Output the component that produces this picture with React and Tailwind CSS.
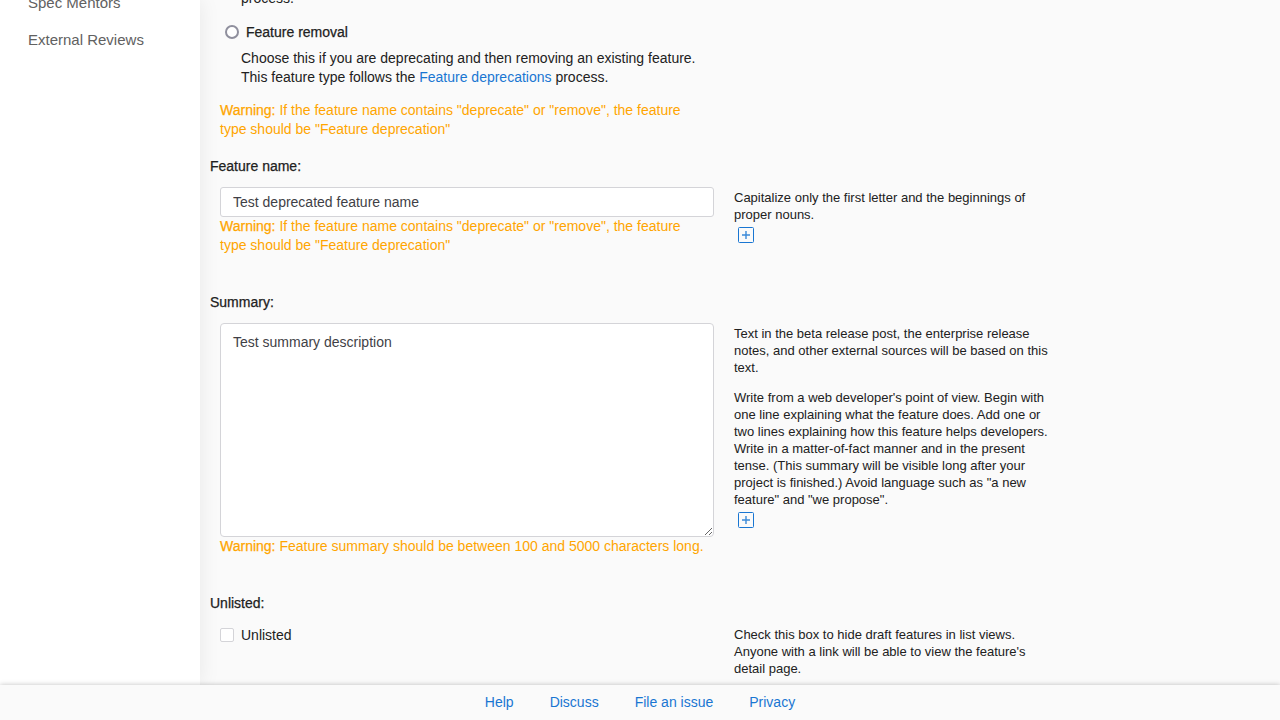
import React from "react";

const NAME_WARNING =
  'If the feature name contains "deprecate" or "remove", the feature type should be "Feature deprecation"';

const footerLinks = ["Help", "Discuss", "File an issue", "Privacy"];

function Link({ children }) {
  return (
    <a href="#" className="text-[#1976d2]">
      {children}
    </a>
  );
}

function Warning({ children }) {
  return (
    <p className="pr-2 text-[#ffa500]">
      <span className="[-webkit-text-stroke:0.25px_#ffa500]">Warning:</span> {children}
    </p>
  );
}

function MoreButton() {
  return (
    <button type="button" aria-label="Show more help" className="mt-1 ml-1 block text-[#1976d2]">
      <svg viewBox="0 0 16 16" className="block size-4" fill="none" stroke="currentColor">
        <rect x="0.5" y="0.5" width="15" height="15" rx="1" />
        <path d="M8 4v8M4 8h8" strokeWidth="1.4" opacity="0.85" />
      </svg>
    </button>
  );
}

function FieldRow({ id, label, help, more, className = "", children }) {
  return (
    <section className={className}>
      <label htmlFor={id} className="block [-webkit-text-stroke:0.25px_#212121]">
        {label}
      </label>
      <div className="mt-[11px] flex gap-5 pl-[10px]">
        <div className="w-[494px] shrink-0">{children}</div>
        <div className="w-[318px] pt-0.5 text-[13px] leading-[17px]">
          <div className="space-y-[13px]">
            {help.map((text) => (
              <p key={text}>{text}</p>
            ))}
          </div>
          {more && <MoreButton />}
        </div>
      </div>
    </section>
  );
}

export default function App() {
  return (
    <div className="flex h-screen flex-col overflow-hidden bg-[#fafafa] font-['Liberation_Sans',Arial,sans-serif] text-[14px] leading-[19px] text-[#212121]">
      <div className="flex min-h-0 flex-1 overflow-hidden">
        <nav className="w-[200px] shrink-0 bg-white shadow-[0_0_20px_rgba(0,0,0,0.08)]">
          <ul className="-mt-2 space-y-[15px] pl-7 text-[15px] leading-[22px] text-[#616161]">
            <li>
              <a href="#">Spec Mentors</a>
            </li>
            <li>
              <a href="#">External Reviews</a>
            </li>
          </ul>
        </nav>

        <main className="min-w-0 flex-1 pl-[10px]">
          <div className="-mt-[11px] ml-[10px] w-[494px]">
            <p className="pl-[21px]">process.</p>
            <div className="mt-[15px] flex items-start pl-[5px]">
              <input
                id="removal"
                type="radio"
                name="featureType"
                className="mt-0.5 size-[14px] appearance-none rounded-full border-2 border-[#8f8f9d] bg-white"
              />
              <label htmlFor="removal" className="pl-[7px] [-webkit-text-stroke:0.25px_#212121]">
                Feature removal
              </label>
            </div>
            <p className="mt-[7px] pl-[21px]">
              Choose this if you are deprecating and then removing an existing feature. This feature
              type follows the <Link>Feature deprecations</Link> process.
            </p>
            <div className="mt-[14px]">
              <Warning>{NAME_WARNING}</Warning>
            </div>
          </div>

          <FieldRow
            id="name"
            label="Feature name:"
            className="mt-[18px]"
            help={["Capitalize only the first letter and the beginnings of proper nouns."]}
            more
          >
            <input
              id="name"
              type="text"
              defaultValue="Test deprecated feature name"
              className="block h-[30px] w-full rounded-[3px] border border-[#d4d4d8] bg-white px-3 text-[14px] text-[#3f3f46]"
            />
            <Warning>{NAME_WARNING}</Warning>
          </FieldRow>

          <FieldRow
            id="summary"
            label="Summary:"
            className="mt-[38px]"
            help={[
              "Text in the beta release post, the enterprise release notes, and other external sources will be based on this text.",
              'Write from a web developer\'s point of view. Begin with one line explaining what the feature does. Add one or two lines explaining how this feature helps developers. Write in a matter-of-fact manner and in the present tense. (This summary will be visible long after your project is finished.) Avoid language such as "a new feature" and "we propose".',
            ]}
            more
          >
            <textarea
              id="summary"
              defaultValue="Test summary description"
              className="block h-[214px] w-full rounded-[4px] border border-[#d4d4d8] bg-white px-3 py-2 text-[14px] leading-5 text-[#3f3f46]"
            />
            <Warning>Feature summary should be between 100 and 5000 characters long.</Warning>
          </FieldRow>

          <FieldRow
            id="unlisted"
            label="Unlisted:"
            className="mt-[38px]"
            help={[
              "Check this box to hide draft features in list views. Anyone with a link will be able to view the feature's detail page.",
            ]}
          >
            <div className="flex items-start pt-0.5">
              <input
                id="unlisted"
                type="checkbox"
                className="mt-0.5 size-[14px] appearance-none rounded-[2px] border border-[#d4d4d8] bg-white"
              />
              <label htmlFor="unlisted" className="pl-[7px]">
                Unlisted
              </label>
            </div>
          </FieldRow>
        </main>
      </div>

      <footer className="relative flex h-[35px] shrink-0 items-center justify-center gap-9 bg-[#fafafa] shadow-[0_0_5px_rgba(0,0,0,0.25)]">
        {footerLinks.map((name) => (
          <Link key={name}>{name}</Link>
        ))}
      </footer>
    </div>
  );
}
